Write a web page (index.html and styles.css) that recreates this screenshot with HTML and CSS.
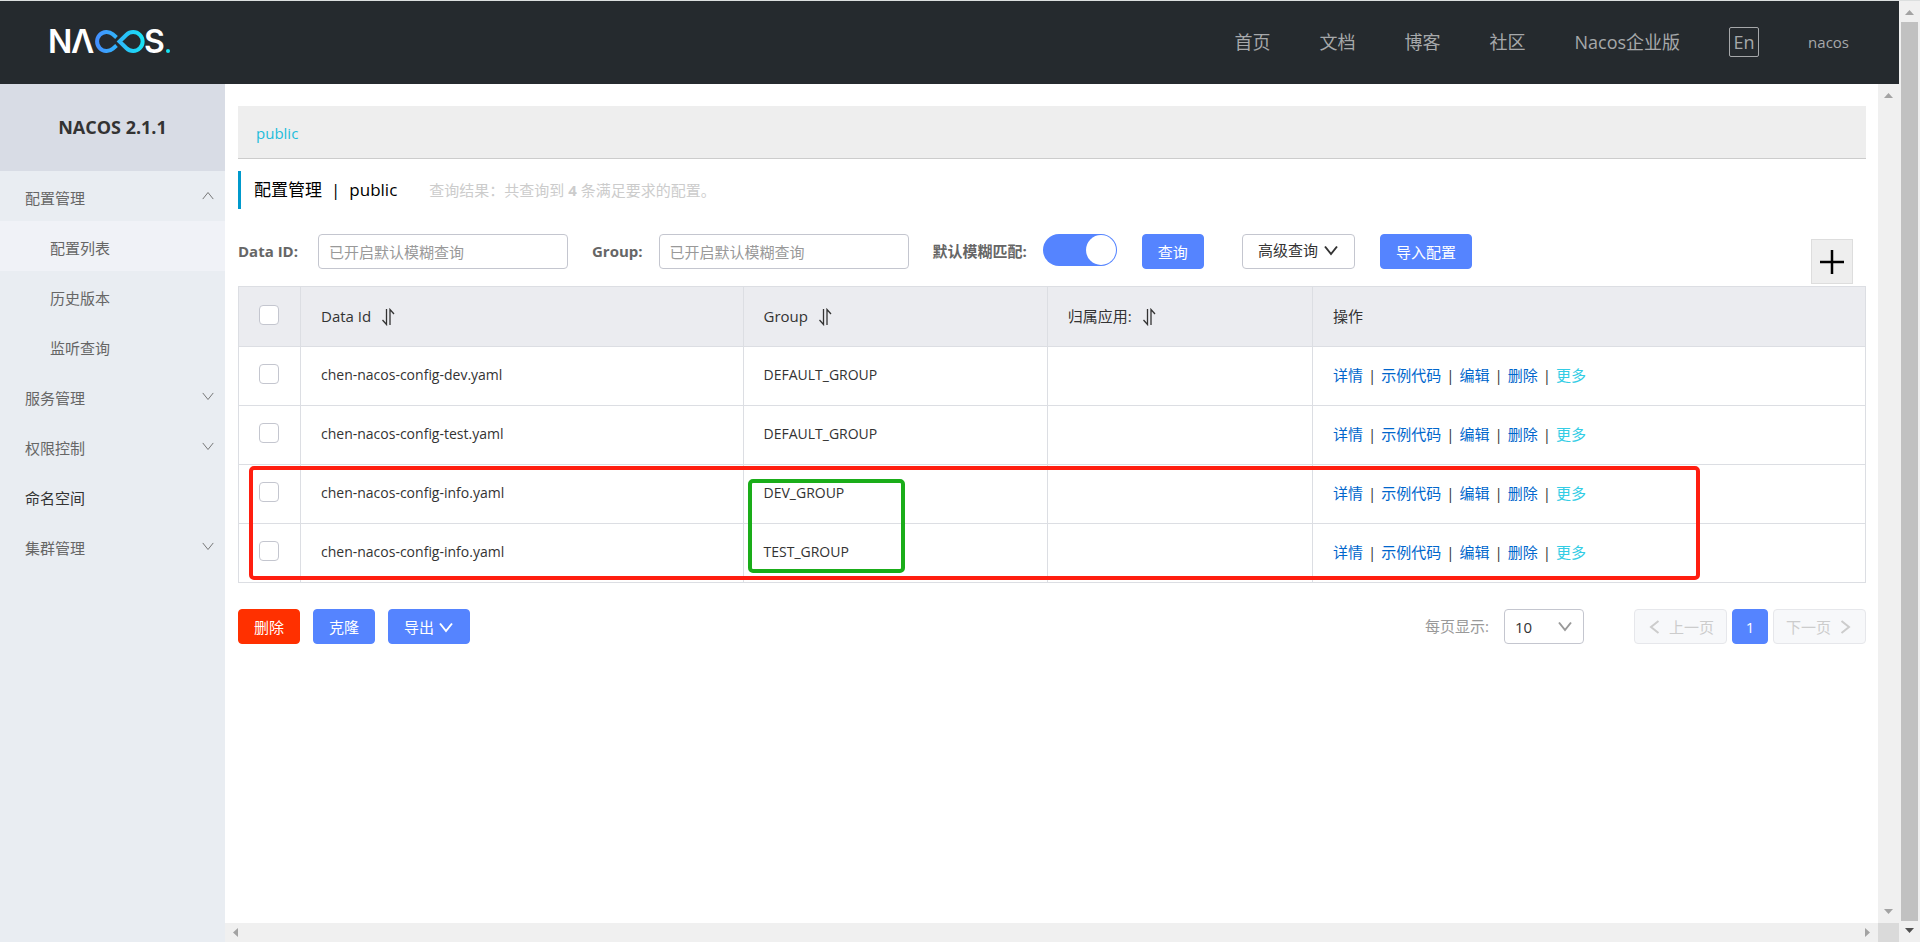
FILE: index.html
```html
<!DOCTYPE html>
<html lang="zh-CN">
<head>
    <meta charset="UTF-8">
    <meta name="viewport" content="width=device-width, initial-scale=1.0">
    <title>Nacos</title>
    <link rel="stylesheet" href="styles.css">
</head>
<body>
    <svg class="defs" width="0" height="0" aria-hidden="true">
        <symbol id="chevron" viewBox="0 0 16 16"><path d="M2 4.500 8 12 14 4.500" fill="none" stroke="currentColor"/></symbol>
        <symbol id="sort" viewBox="0 0 14 18"><path d="M5.500 1v15.500L1.500 12M9 17V1.500l4 4.500" fill="none" stroke="currentColor" stroke-width="1.300"/></symbol>
        <symbol id="arrow" viewBox="0 0 9 5"><path d="M0 5 4.500 0 9 5z" fill="currentColor"/></symbol>
    </svg>

    <div class="page">
        <header class="header">
            <a href="#" class="logo" aria-label="Nacos">
                <svg width="124" height="30" viewBox="0 0 124 30">
                    <defs>
                        <linearGradient id="loop" gradientUnits="userSpaceOnUse" x1="45" y1="0" x2="95" y2="0">
                            <stop offset="0" stop-color="#468dff"/>
                            <stop offset="1" stop-color="#16e5f5"/>
                        </linearGradient>
                    </defs>
                    <text x="-2" y="26" class="logo-text">N</text>
                    <text x="21" y="26" class="logo-text">Λ</text>
                    <g fill="none" stroke="url(#loop)" stroke-width="4">
                        <path d="M66.500 10.500 62.800 7.300A9.500 9.500 0 1 0 62.800 21.700L66.500 18.500"/>
                        <path d="M69.500 14.500 76.500 7.700A9.500 9.500 0 1 1 76.500 21.300Z"/>
                    </g>
                    <text x="94" y="26" class="logo-text">S</text>
                    <circle cx="118" cy="24" r="2" fill="#16e5f5"/>
                </svg>
            </a>
            <nav class="nav">
                <a href="#">首页</a>
                <a href="#">文档</a>
                <a href="#">博客</a>
                <a href="#">社区</a>
                <a href="#">Nacos企业版</a>
                <button type="button" class="lang">En</button>
                <a href="#" class="user">nacos</a>
            </nav>
        </header>

        <div class="layout">
            <aside class="sidebar">
                <h1 class="version">NACOS 2.1.1</h1>
                <ul class="menu">
                    <li><a href="#">配置管理<svg class="caret up"><use href="#chevron"/></svg></a></li>
                    <li class="sub active"><a href="#">配置列表</a></li>
                    <li class="sub"><a href="#">历史版本</a></li>
                    <li class="sub"><a href="#">监听查询</a></li>
                    <li><a href="#">服务管理<svg class="caret"><use href="#chevron"/></svg></a></li>
                    <li><a href="#">权限控制<svg class="caret"><use href="#chevron"/></svg></a></li>
                    <li><a href="#" class="dark">命名空间</a></li>
                    <li><a href="#">集群管理<svg class="caret"><use href="#chevron"/></svg></a></li>
                </ul>
            </aside>

            <div class="view">
                <main class="main">
                    <div class="namespaces"><a href="#">public</a></div>
                    <div class="title">
                        <h2>配置管理<span class="bar">|</span>public</h2>
                        <span class="result">查询结果：共查询到 <strong>4</strong> 条满足要求的配置。</span>
                    </div>

                    <form class="search">
                        <label for="dataId">Data ID:</label>
                        <input type="text" id="dataId" class="text-input" placeholder="已开启默认模糊查询">
                        <label for="group" class="next">Group:</label>
                        <input type="text" id="group" class="text-input" placeholder="已开启默认模糊查询">
                        <label for="fuzzy" class="next">默认模糊匹配:</label>
                        <input type="checkbox" id="fuzzy" class="switch" checked>
                        <button type="button" class="btn primary query">查询</button>
                        <button type="button" class="btn advanced">高级查询<svg class="icon"><use href="#chevron"/></svg></button>
                        <button type="button" class="btn primary import">导入配置</button>
                        <button type="button" class="add" aria-label="新建配置">
                            <svg width="26" height="26" viewBox="0 0 26 26"><path d="M13 1v24M1 13h24" stroke="#000" stroke-width="2.500"/></svg>
                        </button>
                    </form>

                    <div class="table-wrap">
                        <table>
                            <colgroup>
                                <col class="col-check">
                                <col class="col-id">
                                <col class="col-group">
                                <col class="col-app">
                                <col>
                            </colgroup>
                            <thead>
                                <tr>
                                    <th class="check"><input type="checkbox" class="box" aria-label="全选"></th>
                                    <th>Data Id<svg class="sort"><use href="#sort"/></svg></th>
                                    <th>Group<svg class="sort"><use href="#sort"/></svg></th>
                                    <th>归属应用:<svg class="sort"><use href="#sort"/></svg></th>
                                    <th>操作</th>
                                </tr>
                            </thead>
                            <tbody>
                                <tr>
                                    <td class="check"><input type="checkbox" class="box" aria-label="chen-nacos-config-dev.yaml"></td>
                                    <td>chen-nacos-config-dev.yaml</td>
                                    <td>DEFAULT_GROUP</td>
                                    <td></td>
                                    <td class="ops"><a href="#">详情</a><i>|</i><a href="#">示例代码</a><i>|</i><a href="#">编辑</a><i>|</i><a href="#">删除</a><i>|</i><a href="#" class="more">更多</a></td>
                                </tr>
                                <tr>
                                    <td class="check"><input type="checkbox" class="box" aria-label="chen-nacos-config-test.yaml"></td>
                                    <td>chen-nacos-config-test.yaml</td>
                                    <td>DEFAULT_GROUP</td>
                                    <td></td>
                                    <td class="ops"><a href="#">详情</a><i>|</i><a href="#">示例代码</a><i>|</i><a href="#">编辑</a><i>|</i><a href="#">删除</a><i>|</i><a href="#" class="more">更多</a></td>
                                </tr>
                                <tr>
                                    <td class="check"><input type="checkbox" class="box" aria-label="chen-nacos-config-info.yaml DEV_GROUP"></td>
                                    <td>chen-nacos-config-info.yaml</td>
                                    <td class="marked">DEV_GROUP<span class="mark mark-groups"></span></td>
                                    <td></td>
                                    <td class="ops"><a href="#">详情</a><i>|</i><a href="#">示例代码</a><i>|</i><a href="#">编辑</a><i>|</i><a href="#">删除</a><i>|</i><a href="#" class="more">更多</a></td>
                                </tr>
                                <tr>
                                    <td class="check"><input type="checkbox" class="box" aria-label="chen-nacos-config-info.yaml TEST_GROUP"></td>
                                    <td>chen-nacos-config-info.yaml</td>
                                    <td>TEST_GROUP</td>
                                    <td></td>
                                    <td class="ops"><a href="#">详情</a><i>|</i><a href="#">示例代码</a><i>|</i><a href="#">编辑</a><i>|</i><a href="#">删除</a><i>|</i><a href="#" class="more">更多</a></td>
                                </tr>
                            </tbody>
                        </table>
                        <span class="mark mark-rows"></span>
                    </div>

                    <div class="footer">
                        <button type="button" class="btn danger">删除</button>
                        <button type="button" class="btn primary">克隆</button>
                        <button type="button" class="btn primary export">导出<svg class="icon"><use href="#chevron"/></svg></button>
                        <label for="size" class="size-label">每页显示:</label>
                        <div class="select">
                            <select id="size"><option>10</option><option>20</option></select>
                            <svg class="icon"><use href="#chevron"/></svg>
                        </div>
                        <div class="pager">
                            <button type="button" class="btn" disabled><svg class="icon left"><use href="#chevron"/></svg>上一页</button>
                            <button type="button" class="btn primary current">1</button>
                            <button type="button" class="btn" disabled>下一页<svg class="icon right"><use href="#chevron"/></svg></button>
                        </div>
                    </div>
                </main>
                <div class="scroll-y">
                    <svg class="arrow"><use href="#arrow"/></svg>
                    <svg class="arrow down"><use href="#arrow"/></svg>
                </div>
                <div class="scroll-x">
                    <svg class="arrow to-left"><use href="#arrow"/></svg>
                    <svg class="arrow to-right"><use href="#arrow"/></svg>
                </div>
                <div class="corner"></div>
            </div>
        </div>
    </div>

    <div class="scroll-page">
        <svg class="arrow"><use href="#arrow"/></svg>
        <div class="thumb"></div>
        <svg class="arrow down strong"><use href="#arrow"/></svg>
    </div>
</body>
</html>
```

FILE: styles.css
```css
* {
    box-sizing: border-box;
}
body {
    margin: 0;
    height: 100vh;
    display: flex;
    overflow: hidden;
    border-top: 1px solid #dcdfdf;
    font-family: "Open Sans", "Noto Sans CJK SC", sans-serif;
    font-size: 15px;
    line-height: 20px;
    color: #333;
    background: #fff;
}
a {
    text-decoration: none;
    color: inherit;
}
button,
input,
select {
    font: inherit;
    margin: 0;
}
h1,
h2,
ul {
    margin: 0;
    padding: 0;
}
.defs {
    position: absolute;
}
.page {
    flex: 1;
    min-width: 0;
    display: flex;
    flex-direction: column;
}

/* header */
.header {
    height: 83px;
    flex: none;
    display: flex;
    align-items: center;
    justify-content: space-between;
    padding: 0 50px 2px;
    background: #252a2e;
}
.logo svg {
    display: block;
    overflow: visible;
}
.logo-text {
    font-family: Inter, sans-serif;
    font-size: 32px;
    font-weight: 600;
    fill: #fff;
}
.nav {
    display: flex;
    align-items: center;
    gap: 49px;
    font-size: 18px;
    color: #a6a8aa;
}
.lang {
    width: 30px;
    height: 30px;
    padding: 0;
    border: 1px solid #a6a8aa;
    border-radius: 2px;
    background: none;
    color: inherit;
}
.user {
    font-size: 15px;
}

/* sidebar */
.layout {
    flex: 1;
    min-height: 0;
    display: flex;
}
.sidebar {
    width: 225px;
    flex: none;
    background: #e9edf2;
}
.version {
    height: 87px;
    line-height: 87px;
    text-align: center;
    font-size: 18px;
    background: #d8dce5;
}
.menu {
    list-style: none;
    color: #666;
}
.menu a {
    display: flex;
    align-items: center;
    justify-content: space-between;
    height: 50px;
    padding: 4px 10px 0 25px;
}
.menu .sub a {
    padding-left: 50px;
}
.menu .active {
    background: #f0f2f7;
}
.menu .dark {
    color: #333;
}
.caret {
    width: 14px;
    height: 14px;
    margin-bottom: 5px;
}
.caret.up {
    transform: rotate(180deg);
}

/* content */
.view {
    flex: 1;
    min-width: 0;
    display: grid;
    grid-template-columns: 1fr 21px;
    grid-template-rows: 1fr 19px;
}
.main {
    min-width: 0;
    overflow: hidden;
    padding: 22px 12px 0 13px;
}
.namespaces {
    height: 53px;
    padding: 17px 18px 0;
    border-bottom: 1px solid #ccc;
    background: #eee;
    color: #1ebddb;
}
.title {
    display: flex;
    align-items: center;
    height: 38px;
    margin-top: 12px;
    padding-left: 13px;
    border-left: 3px solid #09c;
}
.title h2 {
    font-size: 17px;
    font-weight: 400;
    color: #000;
}
.bar {
    margin: 0 9px;
}
.result {
    margin-left: 32px;
    color: #ccc;
}
.search {
    display: flex;
    align-items: flex-start;
    margin-top: 25px;
    height: 52px;
}
.search label {
    line-height: 35px;
    margin-right: 20px;
    font-weight: 700;
    color: #666;
}
.search .next {
    margin-left: 24px;
    margin-right: 16px;
}
.text-input {
    width: 250px;
    height: 35px;
    padding: 0 10px;
    border: 1px solid #c4c6cf;
    border-radius: 4px;
    color: #333;
}
.text-input::placeholder {
    color: #999;
}
.switch {
    appearance: none;
    display: flex;
    justify-content: flex-end;
    width: 74px;
    height: 32px;
    padding: 1px;
    border-radius: 16px;
    background: #5584ff;
}
.switch::before {
    content: "";
    width: 30px;
    height: 30px;
    border-radius: 50%;
    background: #fff;
}
.btn {
    display: flex;
    align-items: center;
    justify-content: center;
    gap: 5px;
    height: 35px;
    padding: 0 15px;
    border: 1px solid #c4c6cf;
    border-radius: 4px;
    background: #fff;
    color: #333;
    white-space: nowrap;
}
.primary {
    border-color: #5584ff;
    background: #5584ff;
    color: #fff;
}
.danger {
    border-color: #ff3000;
    background: #ff3000;
    color: #fff;
}
.btn:disabled {
    border-color: #e6e7eb;
    background: #f7f8fa;
    color: #ccc;
}
.icon {
    width: 16px;
    height: 16px;
    stroke-width: 2px;
}
.left {
    transform: rotate(90deg);
}
.right {
    transform: rotate(-90deg);
}
.query {
    margin-left: 25px;
}
.advanced {
    margin-left: 38px;
    padding-bottom: 4px;
}
.import {
    margin-left: 25px;
}
.add {
    display: flex;
    align-items: center;
    justify-content: center;
    width: 42px;
    height: 45px;
    margin: 5px 13px 0 auto;
    padding: 0;
    border: 1px solid #ddd;
    background: #eee;
}

/* table */
.table-wrap {
    position: relative;
}
table {
    width: 100%;
    table-layout: fixed;
    border-collapse: collapse;
}
.col-check {
    width: 62px;
}
.col-id {
    width: 27.2%;
}
.col-group {
    width: 18.7%;
}
.col-app {
    width: 16.3%;
}
th,
td {
    height: 59px;
    padding: 0 20px 2px;
    border: 1px solid #dcdee3;
    text-align: left;
    font-weight: 400;
}
th {
    height: 60px;
}
td {
    font-size: 14px;
}
th {
    background: #ebecf0;
}
.check {
    padding-bottom: 4px;
}
.box {
    appearance: none;
    display: block;
    width: 20px;
    height: 20px;
    border: 1px solid #c4c6cf;
    border-radius: 4px;
    background: #fff;
}
.sort {
    width: 14px;
    height: 18px;
    margin-left: 10px;
    vertical-align: -4px;
}
.ops {
    font-size: 15px;
}
.ops a {
    color: #06c;
}
.ops .more {
    color: #33cde5;
}
.ops i {
    margin: 0 5px;
    font-style: normal;
}
.marked {
    position: relative;
}
.mark {
    position: absolute;
    border: 4px solid #ff1e10;
    border-radius: 5px;
    pointer-events: none;
}
.mark-rows {
    left: 11px;
    right: 166px;
    bottom: 3px;
    height: 114px;
}
.mark-groups {
    left: 4px;
    top: 14px;
    width: 157px;
    height: 94px;
    border-color: #1aad19;
}

/* footer */
.footer {
    display: flex;
    gap: 13px;
    margin-top: 26px;
}
.size-label {
    margin-left: auto;
    margin-right: 2px;
    line-height: 35px;
    color: #999;
}
.export {
    gap: 4px;
}
.select {
    position: relative;
}
.select select {
    appearance: none;
    width: 80px;
    height: 35px;
    padding: 0 10px;
    border: 1px solid #c4c6cf;
    border-radius: 4px;
    background: #fff;
    color: #333;
}
.select .icon {
    position: absolute;
    right: 11px;
    top: 9px;
    color: #999;
    pointer-events: none;
}
.pager {
    display: flex;
    gap: 5px;
    margin-left: 37px;
}
.pager .btn {
    gap: 6px;
    min-width: 36px;
    padding: 0 12px;
}

/* scrollbars */
.scroll-y,
.scroll-x,
.scroll-page {
    display: flex;
    align-items: center;
    justify-content: space-between;
    background: #f0f0f0;
    color: #a3a3a3;
}
.scroll-y,
.scroll-page {
    flex-direction: column;
    padding: 9px 0;
}
.scroll-x {
    padding: 0 6px;
}
.corner {
    background: #dadada;
}
.scroll-page {
    width: 21px;
    flex: none;
}
.thumb {
    flex: 1;
    width: 17px;
    margin: 7px 0;
    background: #c1c1c1;
}
.arrow {
    width: 9px;
    height: 5px;
    flex: none;
}
.down {
    transform: rotate(180deg);
}
.strong {
    color: #505050;
}
.to-left {
    transform: rotate(-90deg);
}
.to-right {
    transform: rotate(90deg);
}
```
